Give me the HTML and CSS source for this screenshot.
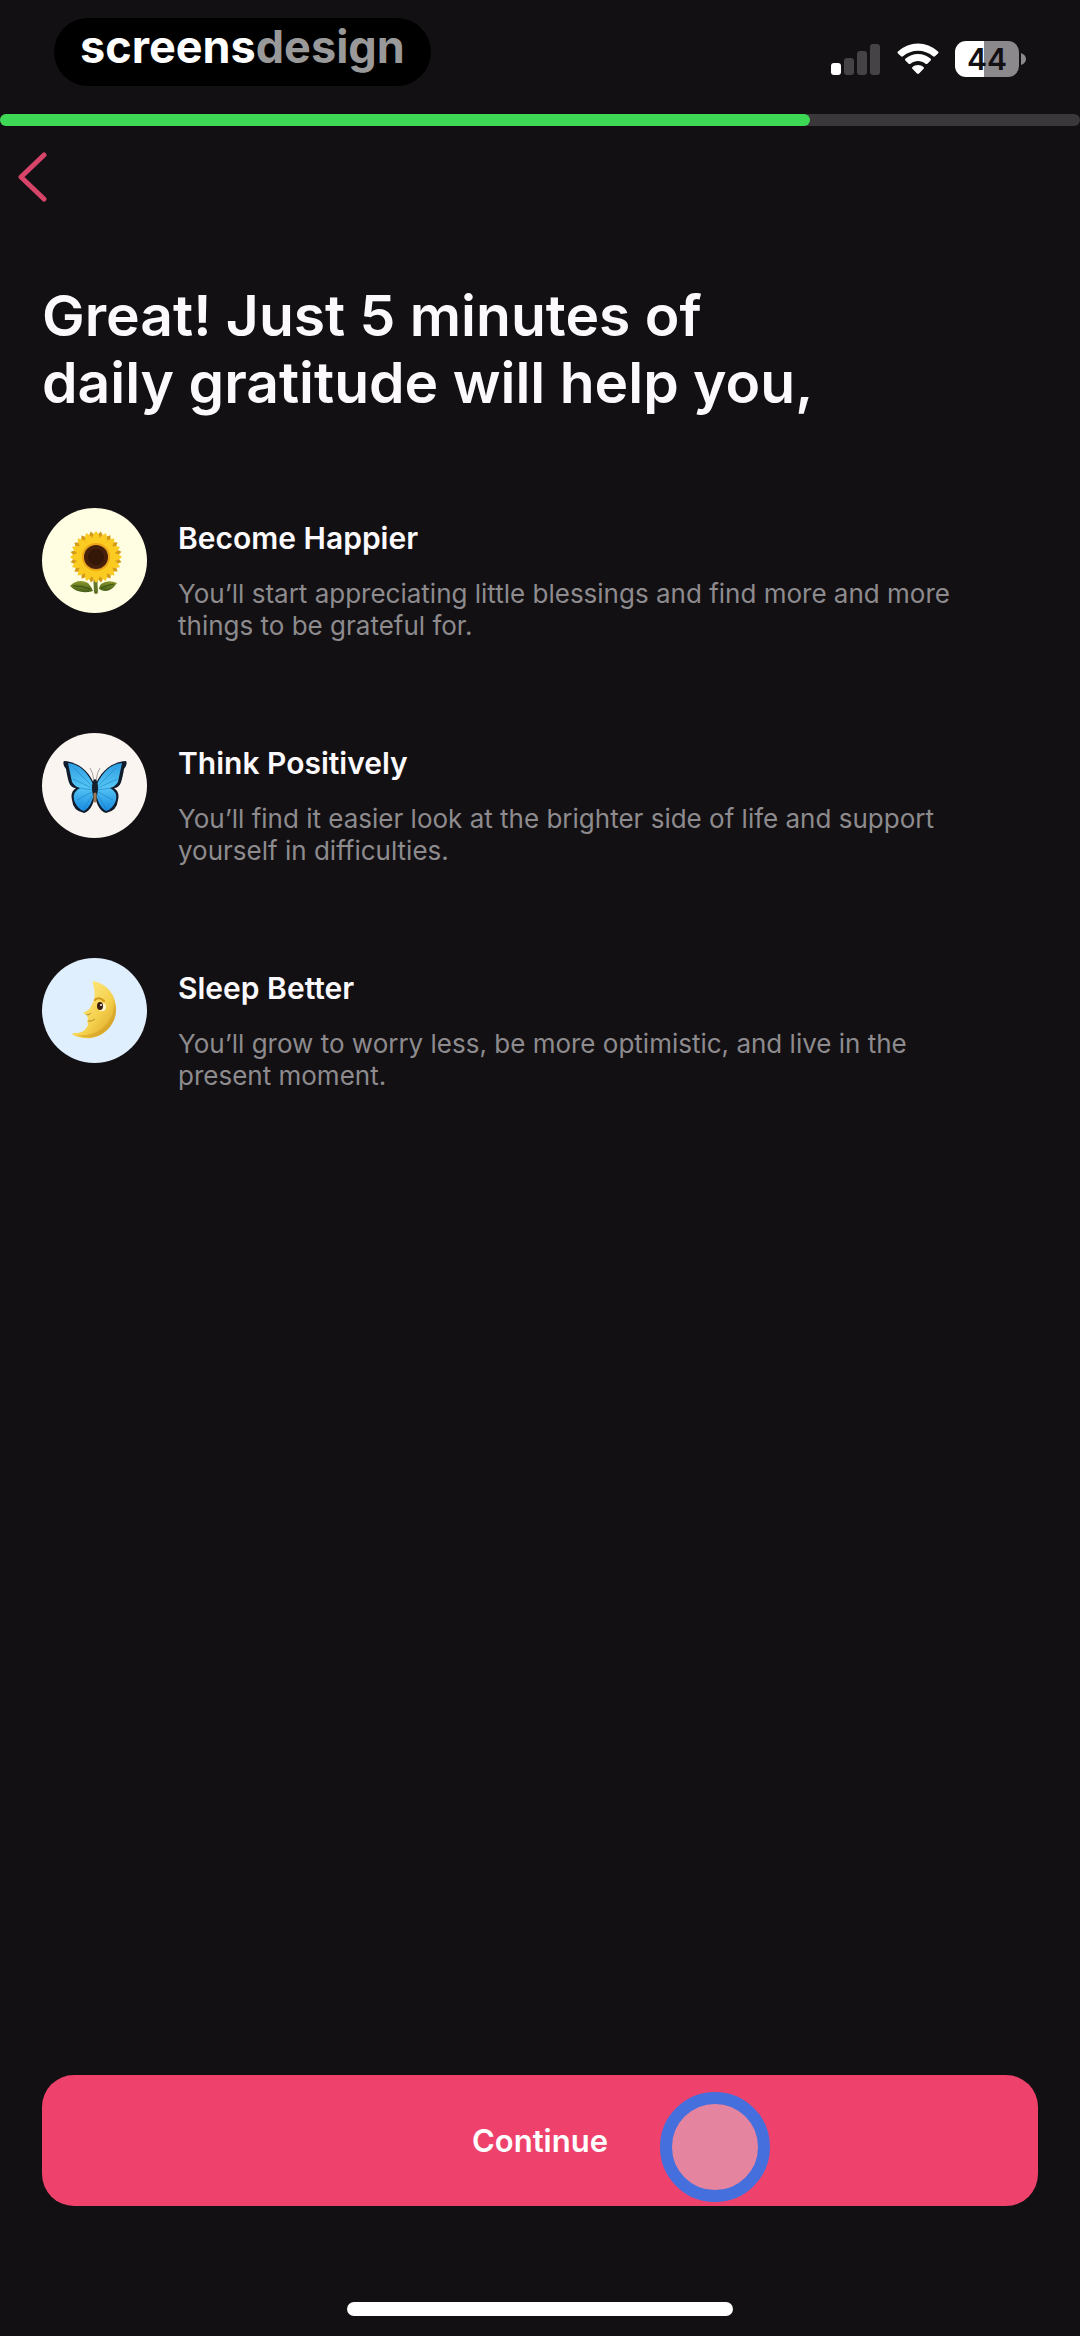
FILE: index.html
```html
<!DOCTYPE html>
<html lang="en">
<head>
    <meta charset="UTF-8">
    <meta name="viewport" content="width=device-width, initial-scale=1.0">
    <title>Daily Gratitude</title>
    <link rel="stylesheet" href="styles.css">
</head>
<body>
    <header class="status-bar">
        <div class="brand">screens<span class="brand-light">design</span></div>
        <div class="status-icons">
            <svg class="signal" viewBox="0 0 50 32" aria-hidden="true">
                <rect x="0" y="20" width="10" height="12" rx="3" fill="#fff"/>
                <rect x="13" y="15" width="10" height="17" rx="3" fill="#454346"/>
                <rect x="26" y="8" width="10" height="24" rx="3" fill="#454346"/>
                <rect x="39" y="1" width="10" height="31" rx="3" fill="#454346"/>
            </svg>
            <svg class="wifi" viewBox="0 0 42 32" aria-hidden="true">
                <path d="M1 8.500Q0 9.500 1 10.500L4 13.300Q5 14 6 13.200C14.500 5.800 27.500 5.800 36 13.200Q37 14 38 13.300L41 10.500Q42 9.500 41 8.500C29.500-2.200 12.500-2.200 1 8.500Z" fill="#fff"/>
                <path d="M8.300 15.800Q7.500 16.700 8.400 17.600L11.600 20.700Q12.500 21.400 13.500 20.700C18 17.200 24 17.200 28.500 20.700Q29.500 21.400 30.400 20.700L33.600 17.600Q34.500 16.700 33.700 15.800C26.500 9.300 15.500 9.300 8.300 15.800Z" fill="#fff"/>
                <path d="M15.300 24.200Q14.600 25 15.400 25.800L20 30.500Q21 31.400 22 30.500L26.600 25.800Q27.400 25 26.700 24.200C23.500 21.300 18.500 21.300 15.300 24.200Z" fill="#fff"/>
            </svg>
            <div class="battery">
                <span class="battery-level">44</span>
                <svg class="battery-tip" viewBox="0 0 5 12" aria-hidden="true"><path d="M0 0Q5 2 5 6Q5 10 0 12Z" fill="#8b898c"/></svg>
            </div>
        </div>
    </header>

    <div class="progress">
        <div class="progress-fill" style="width: 75%"></div>
    </div>

    <button class="back-btn" aria-label="Back">
        <svg viewBox="0 0 30 50" aria-hidden="true">
            <path d="M26 3L3 25L26 47" fill="none" stroke="#d64469" stroke-width="5" stroke-linecap="round" stroke-linejoin="round"/>
        </svg>
    </button>

    <main class="content">
        <h1>Great! Just 5 minutes of<br>daily gratitude will help you,</h1>

        <ul class="benefits">
            <li class="benefit">
                <div class="badge badge-sun">
                    <svg viewBox="0 0 105 105" aria-hidden="true">
                        <defs>
                            <path id="petal" d="M54 44Q45 28 54 18Q63 28 54 44Z"/>
                            <linearGradient id="leaf" x1="0" y1="0" x2="0" y2="1">
                                <stop offset="0" stop-color="#8a982c"/>
                                <stop offset="1" stop-color="#455d1b"/>
                            </linearGradient>
                        </defs>
                        <path d="M54 66Q53 76 54 84" fill="none" stroke="#60752a" stroke-width="4" stroke-linecap="round"/>
                        <path d="M28 78Q36 70 46 75Q49 78 51 83Q37 87 28 78Z" fill="url(#leaf)"/>
                        <path d="M75 75Q66 71 59 76Q57 79 57 81Q67 87 75 75Z" fill="url(#leaf)"/>
                        <path d="M31 78Q39 77 48 81M72 76Q65 77 59 80" fill="none" stroke="#35500f" stroke-width="1"/>
                        <g transform="translate(0 5)">
                            <g fill="#d39a18" transform="rotate(11 54 44)">
                                <use href="#petal"/><use href="#petal" transform="rotate(22.500 54 44)"/>
                                <use href="#petal" transform="rotate(45 54 44)"/><use href="#petal" transform="rotate(67.500 54 44)"/>
                                <use href="#petal" transform="rotate(90 54 44)"/><use href="#petal" transform="rotate(112.500 54 44)"/>
                                <use href="#petal" transform="rotate(135 54 44)"/><use href="#petal" transform="rotate(157.500 54 44)"/>
                                <use href="#petal" transform="rotate(180 54 44)"/><use href="#petal" transform="rotate(202.500 54 44)"/>
                                <use href="#petal" transform="rotate(225 54 44)"/><use href="#petal" transform="rotate(247.500 54 44)"/>
                                <use href="#petal" transform="rotate(270 54 44)"/><use href="#petal" transform="rotate(292.500 54 44)"/>
                                <use href="#petal" transform="rotate(315 54 44)"/><use href="#petal" transform="rotate(337.500 54 44)"/>
                            </g>
                            <g fill="#fbcb22">
                                <use href="#petal"/><use href="#petal" transform="rotate(22.500 54 44)"/>
                                <use href="#petal" transform="rotate(45 54 44)"/><use href="#petal" transform="rotate(67.500 54 44)"/>
                                <use href="#petal" transform="rotate(90 54 44)"/><use href="#petal" transform="rotate(112.500 54 44)"/>
                                <use href="#petal" transform="rotate(135 54 44)"/><use href="#petal" transform="rotate(157.500 54 44)"/>
                                <use href="#petal" transform="rotate(180 54 44)"/><use href="#petal" transform="rotate(202.500 54 44)"/>
                                <use href="#petal" transform="rotate(225 54 44)"/><use href="#petal" transform="rotate(247.500 54 44)"/>
                                <use href="#petal" transform="rotate(270 54 44)"/><use href="#petal" transform="rotate(292.500 54 44)"/>
                                <use href="#petal" transform="rotate(315 54 44)"/><use href="#petal" transform="rotate(337.500 54 44)"/>
                            </g>
                            <circle cx="54" cy="44" r="14" fill="#eda41a"/>
                            <circle cx="54" cy="44" r="12" fill="#46200a"/>
                            <circle cx="54" cy="44" r="8" fill="#351708"/>
                        </g>
                    </svg>
                </div>
                <div class="benefit-text">
                    <h2>Become Happier</h2>
                    <p>You’ll start appreciating little blessings and find more and more things to be grateful for.</p>
                </div>
            </li>
            <li class="benefit">
                <div class="badge badge-butterfly">
                    <svg viewBox="0 0 105 105" aria-hidden="true">
                        <defs>
                            <linearGradient id="wing" x1="0" y1="0" x2="0" y2="1">
                                <stop offset="0" stop-color="#2f9ee2"/>
                                <stop offset="0.500" stop-color="#55c5f5"/>
                                <stop offset="1" stop-color="#188be0"/>
                            </linearGradient>
                            <g id="half">
                                <path d="M53 53C48 39 37 29 22 28Q20 31 24 36C26 47 27 55 34 55Q28 59 30 67Q31 78 42 80C49 78 53 68 53 60Z" fill="#101b2b"/>
                                <path d="M52 53C46 40 38 31 26 30Q29 44 30 49Q33 54 38 55Q30 59 32 67Q35 76 42 78C48 75 51 66 52 60Z" fill="url(#wing)"/>
                                <path d="M51 54L32 35M50 55L31 46M51 57L37 55M50 59L35 67M51 61L42 76" stroke="#1879bd" stroke-width="1" opacity="0.500"/>
                                <path d="M52 48Q51 39 48 35" fill="none" stroke="#a7a09d" stroke-width="1"/>
                            </g>
                        </defs>
                        <use href="#half"/>
                        <use href="#half" transform="translate(106 0) scale(-1 1)"/>
                        <ellipse cx="53" cy="55" rx="3" ry="9" fill="#151e2a"/>
                        <path d="M53 61L53 68" stroke="#a07852" stroke-width="3" stroke-linecap="round"/>
                    </svg>
                </div>
                <div class="benefit-text">
                    <h2>Think Positively</h2>
                    <p>You’ll find it easier look at the brighter side of life and support yourself in difficulties.</p>
                </div>
            </li>
            <li class="benefit">
                <div class="badge badge-moon">
                    <svg viewBox="0 0 105 105" aria-hidden="true">
                        <defs>
                            <linearGradient id="moon" x1="0" y1="0" x2="1" y2="1">
                                <stop offset="0.200" stop-color="#ffe77b"/>
                                <stop offset="0.600" stop-color="#f4d04d"/>
                                <stop offset="1" stop-color="#d59c1d"/>
                            </linearGradient>
                        </defs>
                        <path d="M52 23C67 27 75 39 74 53C72 73 52 87 31 77Q29 75 33 75Q42 75 45 69Q47 66 45 63Q47 61 45 59L46 57Q40 56 42 54Q48 52 49 48Q55 39 51 26Q50 23 52 23Z" fill="url(#moon)"/>
                        <path d="M71 41C76 62 57 80 34 77C54 85 73 71 74 54Q74 48 71 41Z" fill="#cf991c" opacity="0.500"/>
                        <path d="M53 42Q57 38 62 43" fill="none" stroke="#cf981c" stroke-width="2" stroke-linecap="round"/>
                        <path d="M44 57Q48 57 49 55M46 63Q50 64 53 61" fill="none" stroke="#bc8d24" stroke-width="1"/>
                        <ellipse cx="60" cy="49" rx="4" ry="4" fill="#fff5cf"/>
                        <ellipse cx="58" cy="48" rx="3" ry="4" fill="#3a1d0c"/>
                        <circle cx="59" cy="47" r="1" fill="#fff"/>
                    </svg>
                </div>
                <div class="benefit-text">
                    <h2>Sleep Better</h2>
                    <p>You’ll grow to worry less, be more optimistic, and live in the present moment.</p>
                </div>
            </li>
        </ul>
    </main>

    <footer class="footer">
        <div class="cta">
            <button class="continue-btn">Continue</button>
            <span class="touch"></span>
        </div>
        <div class="home-bar"></div>
    </footer>
</body>
</html>
```
FILE: styles.css
```css
* {
    box-sizing: border-box;
}
body {
    background-color: #131013;
    color: #fbf9fc;
    font-family: Inter, "Liberation Sans", sans-serif;
    display: flex;
    flex-direction: column;
    min-height: 100vh;
    margin: 0;
}
.status-bar {
    display: flex;
    justify-content: space-between;
    align-items: center;
    height: 114px;
    padding: 0 54px 10px;
}
.brand {
    height: 68px;
    padding: 0 26px;
    border-radius: 34px;
    background-color: #000;
    color: #fff;
    font-size: 45px;
    font-weight: 700;
    line-height: 58px;
}
.brand-light {
    color: #999;
}
.status-icons {
    display: flex;
    align-items: center;
    gap: 16px;
    padding-top: 14px;
}
.signal {
    width: 50px;
    height: 32px;
}
.wifi {
    width: 42px;
    height: 32px;
}
.battery {
    display: flex;
    align-items: center;
    gap: 2px;
}
.battery-level {
    width: 64px;
    height: 36px;
    border-radius: 11px;
    background: linear-gradient(to right, #fff 45%, #8b898c 45%);
    color: #131013;
    font-size: 30px;
    font-weight: 600;
    line-height: 36px;
    text-align: center;
}
.battery-tip {
    width: 5px;
    height: 12px;
}
.progress {
    height: 12px;
    border-radius: 6px;
    background-color: #3a383b;
}
.progress-fill {
    height: 12px;
    border-radius: 6px;
    background-color: #3dd856;
}
.back-btn {
    align-self: flex-start;
    margin-top: 26px;
    padding: 0 18px;
    border: none;
    background: none;
    cursor: pointer;
}
.back-btn svg {
    display: block;
    width: 30px;
    height: 50px;
}
.content {
    padding: 80px 42px;
}
h1 {
    margin: 0;
    font-size: 57px;
    font-weight: 600;
    line-height: 67px;
}
.benefits {
    display: flex;
    flex-direction: column;
    gap: 91px;
    margin: 92px 0 0;
    padding: 0;
    list-style: none;
}
.benefit {
    display: flex;
    gap: 31px;
}
.badge {
    flex: none;
    width: 105px;
    height: 105px;
    border-radius: 50%;
}
.badge svg {
    display: block;
}
.badge-sun {
    background-color: #fffee3;
}
.badge-butterfly {
    background-color: #fbf5f2;
}
.badge-moon {
    background-color: #e0effd;
}
.benefit-text {
    max-width: 780px;
    padding-top: 10px;
}
h2 {
    margin: 0;
    font-size: 30px;
    font-weight: 600;
    line-height: 40px;
}
.benefit-text p {
    margin: 20px 0 0;
    color: #8d8b8e;
    font-size: 26px;
    line-height: 32px;
}
.footer {
    margin-top: auto;
    padding: 0 42px 20px;
}
.cta {
    position: relative;
}
.continue-btn {
    display: block;
    width: 100%;
    height: 131px;
    border: none;
    border-radius: 32px;
    background-color: #ee426c;
    color: #fff;
    font-family: inherit;
    font-size: 31px;
    font-weight: 600;
    cursor: pointer;
}
/* tap marker over the button */
.touch {
    position: absolute;
    top: 17px;
    left: 62%;
    width: 110px;
    height: 110px;
    border: 12px solid #456fdc;
    border-radius: 50%;
    background-color: #e5849f;
    pointer-events: none;
}
.home-bar {
    width: 386px;
    height: 14px;
    margin: 96px auto 0;
    border-radius: 7px;
    background-color: #fff;
}
```
